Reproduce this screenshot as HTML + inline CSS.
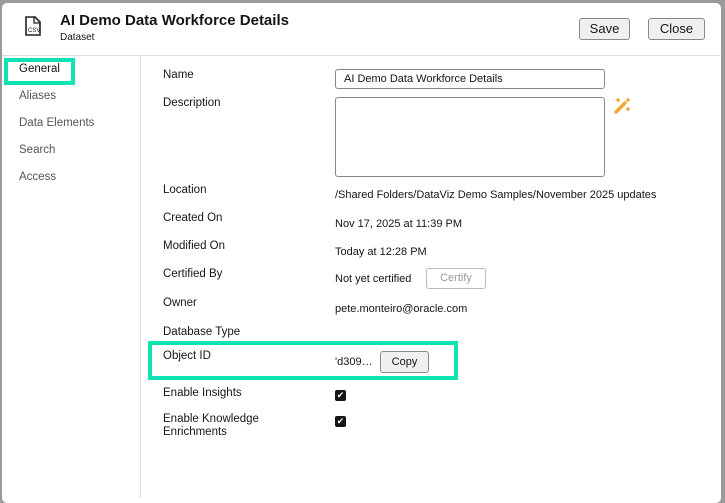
<!DOCTYPE html>
<html><head><style>
body{margin:0;width:725px;height:498px;background:#9a9a9a;font-family:"Liberation Sans",sans-serif;position:relative;overflow:hidden;color:#161513}
.dlg{position:absolute;left:2px;top:3px;width:719px;height:500px;background:#fff;border-radius:5px}
.a{position:absolute;white-space:nowrap}
.lbl{position:absolute;left:163px;font-size:11.5px;color:#161513;font-weight:500}
.val{position:absolute;left:335px;font-size:11px;color:#161513}
.btn{position:absolute;border:1px solid #8a8a8a;border-radius:3px;background:#f1f0ee;font-size:13px;text-align:center;box-sizing:border-box}
.nav{position:absolute;left:19px;font-size:11.5px;color:#555}
.cb{position:absolute;left:335px;width:11px;height:11px;background:#161513;border-radius:2px;color:#fff;font-size:9px;line-height:11px;text-align:center}
</style></head><body>
<div class="dlg"></div>
<svg class="a" style="left:22px;top:15px" width="22" height="22" viewBox="0 0 22 22"><path d="M4 2h9l5 5v13H4z" fill="none" stroke="#222" stroke-width="1.6"/><path d="M12 2v6h6" fill="none" stroke="#222" stroke-width="1.3"/><text x="6" y="17" font-size="6" font-family="Liberation Sans" fill="#222">CSV</text></svg>
<div class="a" style="left:60px;top:12px;font-size:15px;font-weight:bold">AI Demo Data Workforce Details</div>
<div class="a" style="left:60px;top:32px;font-size:10px">Dataset</div>
<div class="btn" style="left:579px;top:18px;width:51px;height:22px;line-height:20px">Save</div>
<div class="btn" style="left:648px;top:18px;width:57px;height:22px;line-height:20px">Close</div>
<div class="a" style="left:2px;top:55px;width:719px;height:1px;background:#ddd"></div>
<div class="a" style="left:140px;top:56px;width:1px;height:442px;background:#ddd"></div>
<div class="a" style="left:4px;top:58px;width:63px;height:19px;border:4px solid #0de3b3"></div>
<div class="nav" style="top:63px;color:#161513">General</div>
<div class="nav" style="top:90px">Aliases</div>
<div class="nav" style="top:117px">Data Elements</div>
<div class="nav" style="top:144px">Search</div>
<div class="nav" style="top:171px">Access</div>
<div class="lbl" style="top:69px">Name</div>
<div class="a" style="left:335px;top:69px;width:270px;height:20px;border:1px solid #888;border-radius:3px;box-sizing:border-box;font-size:11px;line-height:18px;padding-left:8px">AI Demo Data Workforce Details</div>
<div class="lbl" style="top:97px">Description</div>
<div class="a" style="left:335px;top:97px;width:270px;height:80px;border:1px solid #888;border-radius:3px;box-sizing:border-box"></div>
<svg class="a" style="left:613px;top:97px" width="18" height="18" viewBox="0 0 18 18"><path d="M3 15L12 6" stroke="#f2a53a" stroke-width="3.5" stroke-linecap="round"/><path d="M5 1v4M3 3h4M15 10v4M13 12h4M15 1v4M13 3h4" stroke="#f2a53a" stroke-width="1.5"/></svg>
<div class="lbl" style="top:184px">Location</div>
<div class="val" style="top:189px">/Shared Folders/DataViz Demo Samples/November 2025 updates</div>
<div class="lbl" style="top:212px">Created On</div>
<div class="val" style="top:218px">Nov 17, 2025 at 11:39 PM</div>
<div class="lbl" style="top:240px">Modified On</div>
<div class="val" style="top:246px">Today at 12:28 PM</div>
<div class="lbl" style="top:268px">Certified By</div>
<div class="val" style="top:273px">Not yet certified</div>
<div class="btn" style="left:426px;top:268px;width:60px;height:21px;line-height:19px;font-size:11px;color:#999;border-color:#bbb;background:#fff">Certify</div>
<div class="lbl" style="top:297px">Owner</div>
<div class="val" style="top:303px">pete.monteiro@oracle.com</div>
<div class="lbl" style="top:326px">Database Type</div>
<div class="a" style="left:148px;top:341px;width:302px;height:31px;border:4px solid #0de3b3"></div>
<div class="lbl" style="top:350px">Object ID</div>
<div class="val" style="top:356px">'d309…</div>
<div class="btn" style="left:380px;top:351px;width:49px;height:22px;line-height:20px;font-size:11px">Copy</div>
<div class="lbl" style="top:387px">Enable Insights</div>
<div class="cb" style="top:390px">✔</div>
<div class="lbl" style="top:413px;line-height:13px">Enable Knowledge<br>Enrichments</div>
<div class="cb" style="top:416px">✔</div>
</body></html>
